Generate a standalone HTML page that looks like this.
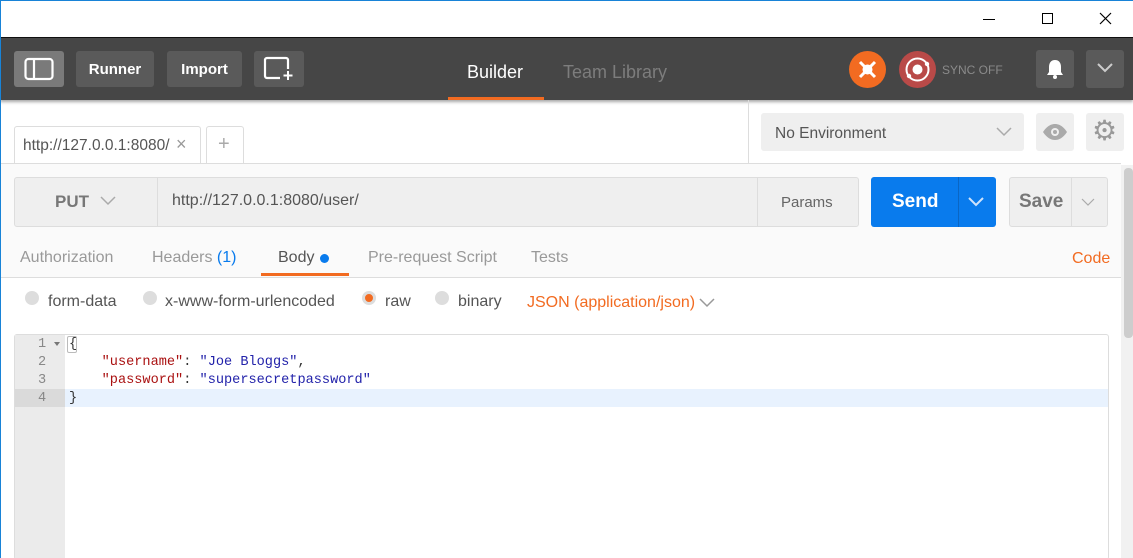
<!DOCTYPE html>
<html><head><meta charset="utf-8"><style>
*{box-sizing:border-box;margin:0;padding:0}
html,body{width:1133px;height:558px;overflow:hidden}
body{background:#fff;font-family:"Liberation Sans",sans-serif;position:relative}
.a{position:absolute}
.btn{position:absolute;background:#5a5a5a;border-radius:3px;color:#fff;font-weight:bold;font-size:15px;text-align:center;line-height:36px}
.gr{font-size:16px}
.mono{font-family:"Liberation Mono",monospace;font-size:13.6px}
</style></head><body>
<div class="a" style="left:0;top:0;width:1133px;height:1px;background:#1883d7"></div>
<div class="a" style="left:0;top:0;width:1px;height:558px;background:#1883d7;z-index:5"></div>
<div class="a" style="left:983px;top:19px;width:12px;height:1px;background:#000"></div>
<div class="a" style="left:1042px;top:13px;width:11px;height:11px;border:1px solid #000"></div>
<svg class="a" style="left:1099px;top:12px" width="13" height="13"><path d="M1 1L12 12M12 1L1 12" stroke="#000" stroke-width="1.2"/></svg>
<div class="a" style="left:0;top:37px;width:1133px;height:1px;background:#111"></div>
<div class="a" style="left:0;top:38px;width:1133px;height:62px;background:#464646;box-shadow:0 2px 3px rgba(0,0,0,.35)"></div>
<div class="btn" style="left:14px;top:51px;width:50px;height:36px;background:#7a7a7a"></div>
<svg class="a" style="left:24px;top:57px" width="30" height="24"><rect x="1.5" y="2" width="27" height="20" rx="3" fill="none" stroke="#fff" stroke-width="2.2"/><line x1="10" y1="2" x2="10" y2="22" stroke="#fff" stroke-width="2.2"/></svg>
<div class="btn" style="left:76px;top:51px;width:78px;height:36px;line-height:38px">Runner</div>
<div class="btn" style="left:167px;top:51px;width:75px;height:36px;line-height:38px">Import</div>
<div class="btn" style="left:254px;top:51px;width:50px;height:36px"></div>
<svg class="a" style="left:263px;top:56px" width="32" height="26"><path d="M17 22H4a2 2 0 0 1-2-2V4a2 2 0 0 1 2-2h19a2 2 0 0 1 2 2v9" fill="none" stroke="#fff" stroke-width="2.2"/><path d="M25 15v9M20.5 19.5h9" stroke="#fff" stroke-width="2"/></svg>
<div class="a" style="left:467px;top:62px;color:#fff;font-size:18px">Builder</div>
<div class="a" style="left:448px;top:97px;width:96px;height:3px;background:#f26b21"></div>
<div class="a" style="left:563px;top:62px;color:#7d7d7d;font-size:18px">Team Library</div>
<div class="a" style="left:849px;top:51px;width:37px;height:37px;border-radius:50%;background:#f26b21"></div>
<svg class="a" style="left:849px;top:51px" width="37" height="37"><path d="M11 11L26 26M26 11L11 26" stroke="#fff" stroke-width="3"/><circle cx="18.5" cy="18.5" r="5" fill="#fff"/></svg>
<div class="a" style="left:899px;top:51px;width:37px;height:37px;border-radius:50%;background:#b94a48"></div>
<svg class="a" style="left:899px;top:51px" width="37" height="37"><circle cx="18.5" cy="18.5" r="11" fill="none" stroke="#fff" stroke-width="2"/><circle cx="18.5" cy="18.5" r="5" fill="#fff"/><circle cx="28" cy="13" r="2.2" fill="#fff"/><circle cx="10" cy="25" r="2.2" fill="#fff"/></svg>
<div class="a" style="left:942px;top:63px;color:#8a8a8a;font-size:12px">SYNC OFF</div>
<div class="btn" style="left:1036px;top:50px;width:38px;height:38px"></div>
<svg class="a" style="left:1043px;top:57px" width="24" height="24"><path d="M12 3c-4 0-6 3-6 7v5l-2 3h16l-2-3v-5c0-4-2-7-6-7z" fill="#fff"/><circle cx="12" cy="20" r="2" fill="#fff"/></svg>
<div class="btn" style="left:1086px;top:50px;width:38px;height:38px"></div>
<svg class="a" style="left:1097px;top:63px" width="16" height="10"><path d="M1 1l7 7 7-7" fill="none" stroke="#ccc" stroke-width="2"/></svg>
<div class="a" style="left:14px;top:126px;width:187px;height:38px;border:1px solid #ddd;border-bottom:none;border-radius:3px 3px 0 0;background:#fff"></div>
<div class="a" style="left:23px;top:137px;color:#555;font-size:15.5px">http://127.0.0.1:8080/</div>
<div class="a" style="left:176px;top:134px;color:#999;font-size:18px">×</div>
<div class="a" style="left:206px;top:126px;width:38px;height:37px;border:1px solid #ddd;border-bottom:none;border-radius:3px 3px 0 0"></div>
<div class="a" style="left:218px;top:133px;color:#aaa;font-size:20px">+</div>
<div class="a" style="left:748px;top:100px;width:1px;height:63px;background:#ddd"></div>
<div class="a" style="left:761px;top:113px;width:263px;height:38px;background:#efefef;border-radius:3px"></div>
<div class="a" style="left:775px;top:125px;color:#555;font-size:15.5px">No Environment</div>
<svg class="a" style="left:996px;top:127px" width="16" height="10"><path d="M1 1l7 7 7-7" fill="none" stroke="#aaa" stroke-width="1.5"/></svg>
<div class="a" style="left:1036px;top:113px;width:38px;height:38px;background:#efefef;border-radius:3px"></div>
<svg class="a" style="left:1040px;top:122px" width="30" height="20"><path d="M3 10C7 4 11 2 15 2s8 2 12 8c-4 6-8 8-12 8S7 16 3 10z" fill="#aaa"/><circle cx="15" cy="10" r="4" fill="#efefef"/><circle cx="15" cy="10" r="2" fill="#aaa"/></svg>
<div class="a" style="left:1086px;top:113px;width:38px;height:38px;background:#efefef;border-radius:3px"></div>
<div class="a" style="left:1092px;top:114px;color:#999;font-size:28px">⚙</div>
<div class="a" style="left:0;top:163px;width:1121px;height:115px;background:#fafafa;border-top:1px solid #ddd;border-bottom:1px solid #ddd"></div>
<div class="a" style="left:14px;top:177px;width:845px;height:50px;background:#efefef;border:1px solid #ddd;border-radius:3px"></div>
<div class="a" style="left:157px;top:178px;width:1px;height:48px;background:#ddd"></div>
<div class="a" style="left:757px;top:178px;width:1px;height:48px;background:#ddd"></div>
<div class="a" style="left:55px;top:192px;color:#777;font-size:17px;font-weight:bold">PUT</div>
<svg class="a" style="left:100px;top:196px" width="16" height="10"><path d="M1 1l7 7 7-7" fill="none" stroke="#aaa" stroke-width="1.5"/></svg>
<div class="a" style="left:172px;top:192px;color:#555;font-size:16px">http://127.0.0.1:8080/user/</div>
<div class="a" style="left:781px;top:194px;color:#666;font-size:15px">Params</div>
<div class="a" style="left:871px;top:177px;width:125px;height:50px;background:#097bed;border-radius:3px"></div>
<div class="a" style="left:958px;top:177px;width:1px;height:50px;background:#0a66c4"></div>
<div class="a" style="left:892px;top:191px;color:#fff;font-size:19px;font-weight:bold">Send</div>
<svg class="a" style="left:968px;top:197px" width="16" height="10"><path d="M1 1l7 7 7-7" fill="none" stroke="#cfe3fb" stroke-width="2"/></svg>
<div class="a" style="left:1009px;top:177px;width:99px;height:50px;background:#efefef;border:1px solid #ddd;border-radius:3px"></div>
<div class="a" style="left:1071px;top:178px;width:1px;height:48px;background:#ddd"></div>
<div class="a" style="left:1019px;top:191px;color:#777;font-size:19px;font-weight:bold">Save</div>
<svg class="a" style="left:1081px;top:198px" width="14" height="9"><path d="M1 1l6 6 6-6" fill="none" stroke="#aaa" stroke-width="1.2"/></svg>
<div class="a gr" style="left:20px;top:249px;color:#999">Authorization</div>
<div class="a gr" style="left:152px;top:249px;color:#999">Headers <span style="color:#097bed">(1)</span></div>
<div class="a gr" style="left:278px;top:249px;color:#555">Body</div>
<div class="a" style="left:320px;top:254px;width:9px;height:9px;border-radius:50%;background:#097bed"></div>
<div class="a" style="left:261px;top:273px;width:88px;height:3px;background:#f26b21"></div>
<div class="a gr" style="left:368px;top:249px;color:#999">Pre-request Script</div>
<div class="a gr" style="left:531px;top:249px;color:#999">Tests</div>
<div class="a gr" style="left:1072px;top:250px;color:#f26b21">Code</div>
<div class="a" style="left:25px;top:291px;width:14px;height:14px;border-radius:50%;background:#ddd"></div>
<div class="a gr" style="left:48px;top:293px;color:#555">form-data</div>
<div class="a" style="left:143px;top:291px;width:14px;height:14px;border-radius:50%;background:#ddd"></div>
<div class="a gr" style="left:165px;top:293px;color:#555">x-www-form-urlencoded</div>
<div class="a" style="left:362px;top:291px;width:14px;height:14px;border-radius:50%;background:#f26b21;border:3px solid #ddd"></div>
<div class="a gr" style="left:385px;top:293px;color:#555">raw</div>
<div class="a" style="left:435px;top:291px;width:14px;height:14px;border-radius:50%;background:#ddd"></div>
<div class="a gr" style="left:458px;top:293px;color:#555">binary</div>
<div class="a gr" style="left:527px;top:294px;color:#f26b21">JSON (application/json)</div>
<svg class="a" style="left:699px;top:298px" width="16" height="10"><path d="M1 1l7 7 7-7" fill="none" stroke="#999" stroke-width="1.5"/></svg>
<div class="a" style="left:14px;top:334px;width:1095px;height:226px;border:1px solid #ddd;border-radius:3px;background:#fff"></div>
<div class="a" style="left:15px;top:335px;width:50px;height:223px;background:#ebebeb"></div>
<div class="a" style="left:65px;top:389px;width:1043px;height:18px;background:#e8f2fe"></div>
<div class="a" style="left:15px;top:389px;width:50px;height:18px;background:#dadada"></div>
<div class="a mono" style="left:38px;top:336px;color:#888;line-height:18px">1<br>2<br>3<br>4</div>
<div class="a" style="left:54px;top:342px;width:0;height:0;border-left:3px solid transparent;border-right:3px solid transparent;border-top:4px solid #777"></div>
<div class="a mono" style="left:69px;top:336px;line-height:18px;white-space:pre;color:#333">{
    <span style="color:#a11">"username"</span>: <span style="color:#22a">"Joe Bloggs"</span>,
    <span style="color:#a11">"password"</span>: <span style="color:#22a">"supersecretpassword"</span>
}</div>
<div class="a" style="left:67px;top:336px;width:10px;height:17px;border:1px solid #bbb;border-radius:2px"></div>
<div class="a" style="left:1121px;top:165px;width:12px;height:393px;background:#f1f1f1"></div>
<div class="a" style="left:1124px;top:168px;width:9px;height:170px;background:#cdcdcd;border-radius:4px"></div>
</body></html>
